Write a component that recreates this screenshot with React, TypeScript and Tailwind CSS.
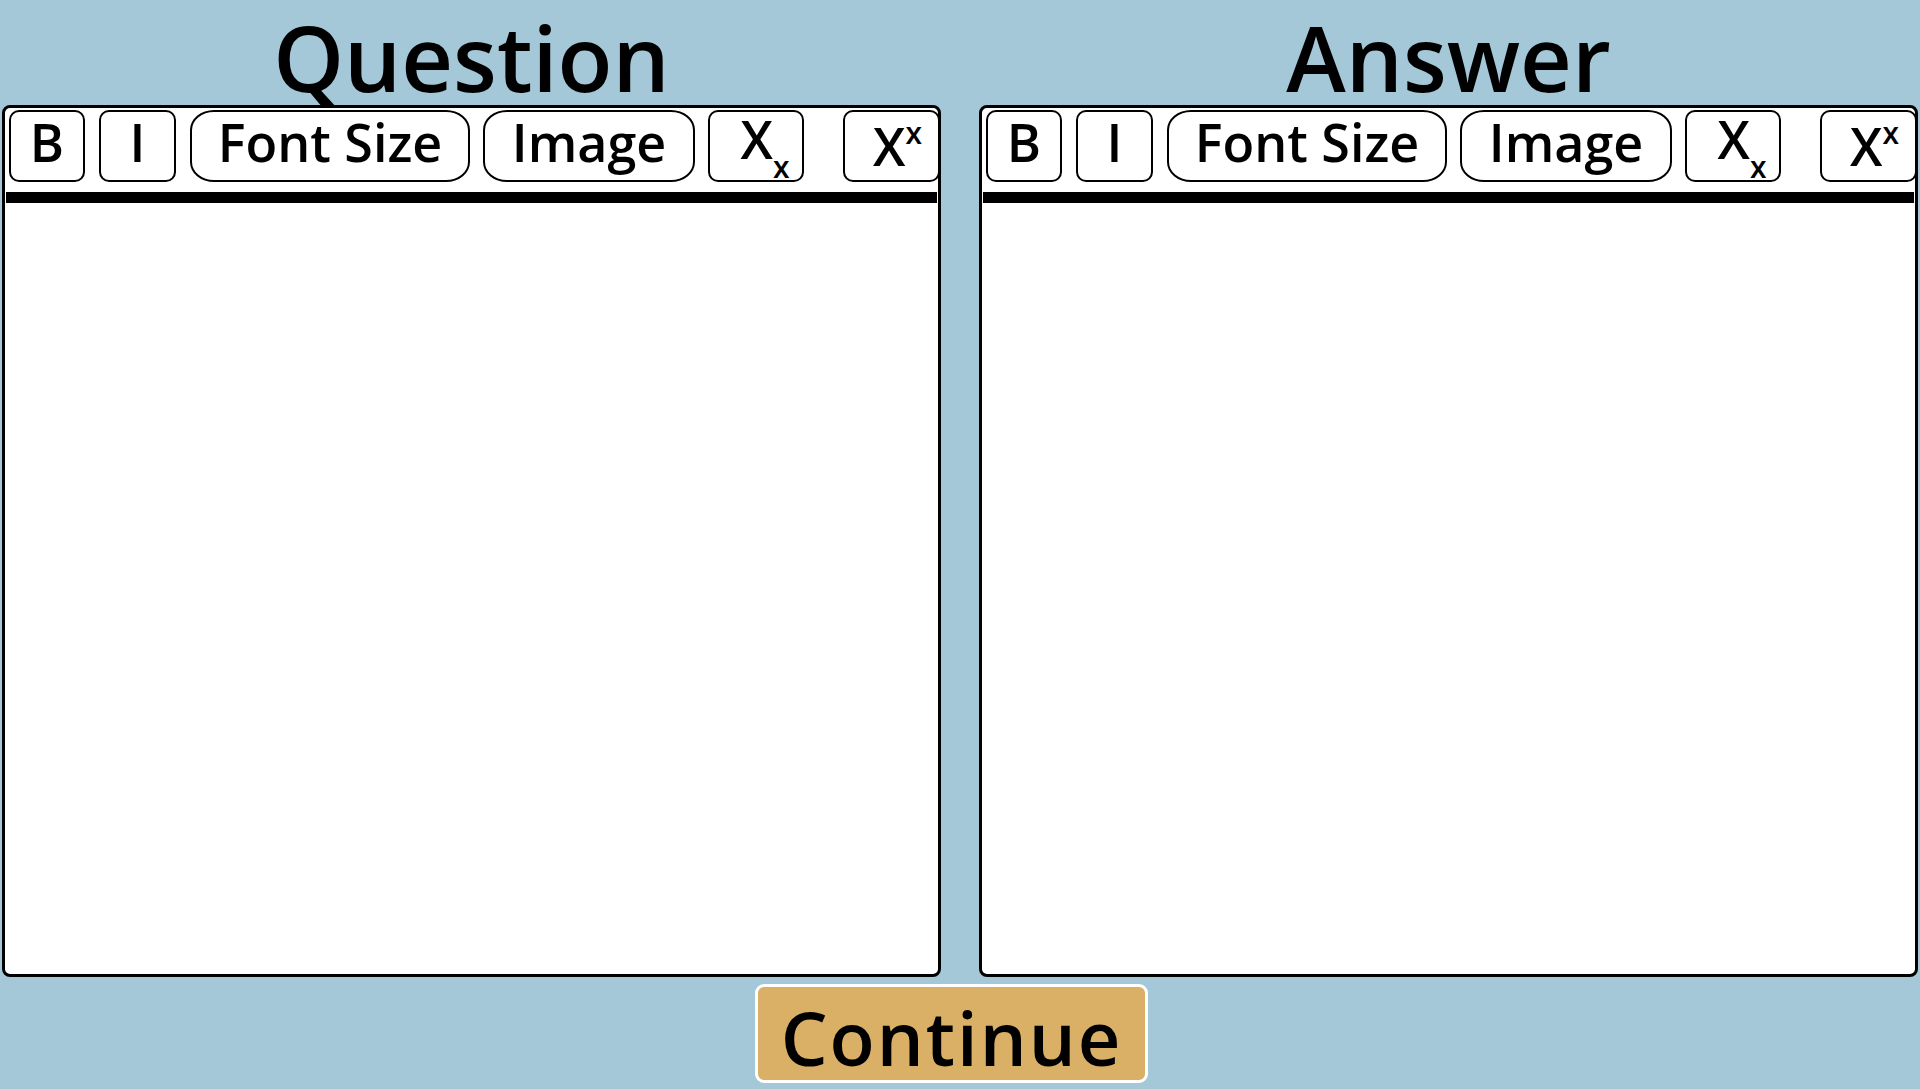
import type { ReactNode } from "react";

interface ToolButtonProps {
  width: string;
  round?: string;
  className?: string;
  children: ReactNode;
}

const ToolButton = ({ width, round = "rounded-[10px]", className = "", children }: ToolButtonProps) => {
  return (
    <button
      type="button"
      className={`${width} ${round} ${className} h-[72px] shrink-0 border-2 border-black bg-white flex items-center justify-center pb-[9px] text-[52px] leading-none font-[550] text-black`}
    >
      {children}
    </button>
  );
};

const EditorPanel = ({ title }: { title: string }) => {
  return (
    <div className="flex flex-col">
      <div className="h-[105px] flex justify-center items-start pt-[9px]">
        <h1 className="text-[90px] leading-[96px] font-[550] text-black">{title}</h1>
      </div>
      <div className="h-[872px] border-[3px] border-black rounded-[8px] bg-white flex flex-col">
        <div className="flex items-start gap-[14px] pl-[4px] pt-[2px]">
          <ToolButton width="w-[76px]">B</ToolButton>
          <ToolButton width="w-[77px]">I</ToolButton>
          <ToolButton width="w-[280px]" round="rounded-[24px/20px]">
            Font Size
          </ToolButton>
          <ToolButton width="w-[212px]" round="rounded-[24px/20px]" className="-ml-[1px]">
            Image
          </ToolButton>
          <ToolButton width="w-[96px]" className="-ml-[1px] pl-[18px]">
            <span className="relative -top-[3px]">X</span>
            <span className="relative top-[25px] text-[30px]">x</span>
          </ToolButton>
          <ToolButton width="w-[97px]" className="ml-auto -mr-[2px] pl-[12px]">
            <span className="relative top-[4px]">X</span>
            <span className="relative -top-[9px] text-[30px]">x</span>
          </ToolButton>
        </div>
        <div className="mt-[10px] mx-[1px] h-[11px] bg-black" />
        <div className="flex-1" />
      </div>
    </div>
  );
};

export default function App() {
  return (
    <div className="w-[1920px] h-[1089px] overflow-hidden bg-[#a4c8d8] flex flex-col font-['Open_Sans','Noto_Sans',sans-serif]">
      <div className="grid grid-cols-2 gap-[38px] px-[2px]">
        <EditorPanel title="Question" />
        <EditorPanel title="Answer" />
      </div>
      <div className="flex justify-center pr-[17px] mt-[7px]">
        <button
          type="button"
          className="w-[393px] h-[99px] border-[3px] border-white rounded-[9px] bg-[#d9b066] flex items-center justify-center pt-[8px] text-[74px] leading-none tracking-[2px] font-semibold text-black"
        >
          Continue
        </button>
      </div>
    </div>
  );
}
